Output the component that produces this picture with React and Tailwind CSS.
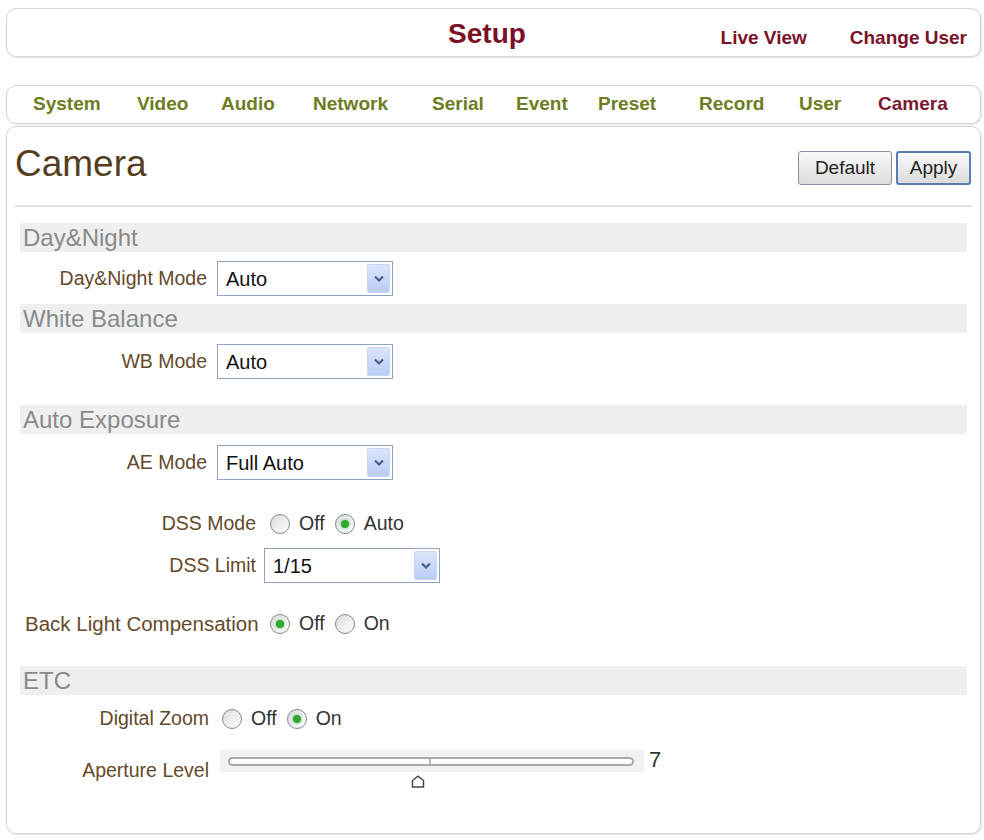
import React from "react";

// section header band
const Band = ({ title, className = "" }) => (
	<div
		className={`h-[29px] bg-[#efefef] pl-[3px] flex items-center text-[24px] leading-none text-[#8a8a8a] ${className}`}
	>
		{title}
	</div>
);

const Chevron = () => (
	<svg width="12" height="8" viewBox="0 0 12 8">
		<path d="M2 1.5 L6 5.5 L10 1.5" fill="none" stroke="#4b5f8c" strokeWidth="2.2" />
	</svg>
);

const Select = ({ value, width = "w-[176px]" }) => (
	<div
		className={`${width} h-[35px] border border-[#8fa5c2] bg-white flex items-center justify-between`}
	>
		<span className="pl-[8px] text-[20px] text-[#111]">{value}</span>
		<div className="w-[23px] h-[29px] mr-[2px] rounded-[2px] border border-[#c8d6f4] bg-gradient-to-b from-[#dbe5fb] to-[#b9cdf5] flex items-center justify-center">
			<Chevron />
		</div>
	</div>
);

const Radio = ({ checked }) => (
	<span className="w-[20px] h-[20px] rounded-full border-[1.5px] border-[#7f8891] bg-gradient-to-br from-[#dcdcdc] to-[#ffffff] flex items-center justify-center shrink-0">
		{checked && (
			<span className="w-[8px] h-[8px] rounded-full bg-[#33a633] shadow-[0_0_2px_1px_#a8dca8]" />
		)}
	</span>
);

const RadioGroup = ({ options, selected }) => (
	<div className="flex items-center gap-[10px]">
		{options.map((opt) => (
			<label key={opt} className="flex items-center gap-[9px] text-[19.5px] text-[#333]">
				<Radio checked={opt === selected} />
				<span>{opt}</span>
			</label>
		))}
	</div>
);

const Label = ({ children, className = "" }) => (
	<div className={`text-[19.5px] text-[#65492a] shrink-0 ${className}`}>
		{children}
	</div>
);

const navItems = [
	["System", "w-[104px]"],
	["Video", "w-[84px]"],
	["Audio", "w-[92px]"],
	["Network", "w-[119px]"],
	["Serial", "w-[84px]"],
	["Event", "w-[82px]"],
	["Preset", "w-[101px]"],
	["Record", "w-[100px]"],
	["User", "w-[79px]"],
	["Camera", "w-[90px]"],
];

const boxStyle =
	"border border-[#d6d6d6] rounded-[10px] bg-white shadow-[1px_1px_2px_rgba(0,0,0,0.12)]";

const App = () => {
	return (
		<div className="min-h-[840px] bg-white pt-[8px] pl-[6px] pr-[3px] font-['Liberation_Sans',Arial,sans-serif]">
			{/* top bar */}
			<div className={`${boxStyle} h-[49px] flex items-start`}>
				<div className="flex-1" />
				<div className="pt-[9px] text-[28px] leading-[32px] font-bold text-[#7a1128]">
					Setup
				</div>
				<div className="flex-1 flex justify-end pr-[13px] pt-[18px] text-[19px] leading-[22px] font-bold text-[#7a1128]">
					<span>Live View</span>
					<span className="ml-[43px]">Change User</span>
				</div>
			</div>

			{/* menu */}
			<div className={`${boxStyle} mt-[28px] h-[39px] flex items-center pl-[26px]`}>
				{navItems.map(([name, w]) => (
					<span
						key={name}
						className={`${w} text-[19px] font-bold ${
							name === "Camera" ? "text-[#7a1a35]" : "text-[#6c7d22]"
						}`}
					>
						{name}
					</span>
				))}
			</div>

			{/* content */}
			<div className={`${boxStyle} mt-[2px] h-[708px]`}>
				<div className="flex items-start justify-between pt-[15px] pl-[8px] pr-[9px]">
					<div className="text-[37px] leading-[44px] text-[#553e1e]">Camera</div>
					<div className="flex gap-[4px] mt-[9px]">
						<button className="w-[94px] h-[34px] rounded-[3px] border border-[#8094ab] bg-gradient-to-b from-[#fafafa] to-[#dcdcdc] text-[19px] text-[#222]">
							Default
						</button>
						<button className="w-[75px] h-[34px] rounded-[3px] border-2 border-[#5b7fb0] bg-gradient-to-b from-[#fafafa] to-[#dcdcdc] text-[19px] text-[#222]">
							Apply
						</button>
					</div>
				</div>
				<div className="mt-[19px] mx-[8px] border-t-2 border-[#e2e2e2]" />

				<div className="mx-[13px]">
					<Band title="Day&Night" className="mt-[16px]" />
					<div className="mt-[9px] flex items-center">
						<Label className="w-[197px] pr-[10px] text-right">Day&amp;Night Mode</Label>
						<Select value="Auto" />
					</div>

					<Band title="White Balance" className="mt-[8px]" />
					<div className="mt-[11px] flex items-center">
						<Label className="w-[197px] pr-[10px] text-right">WB Mode</Label>
						<Select value="Auto" />
					</div>

					<Band title="Auto Exposure" className="mt-[26px]" />
					<div className="mt-[11px] flex items-center">
						<Label className="w-[197px] pr-[10px] text-right">AE Mode</Label>
						<Select value="Full Auto" />
					</div>

					<div className="mt-[32px] h-[24px] flex items-center">
						<Label className="w-[244px] pr-[8px] text-right">DSS Mode</Label>
						<div className="ml-[6px]">
							<RadioGroup options={["Off", "Auto"]} selected="Auto" />
						</div>
					</div>
					<div className="mt-[12px] flex items-center">
						<Label className="w-[244px] pr-[8px] text-right">DSS Limit</Label>
						<Select value="1/15" />
					</div>

					<div className="mt-[29px] h-[24px] flex items-center">
						<Label className="w-[250px] pl-[5px] text-left !text-[20.5px]">
							Back Light Compensation
						</Label>
						<RadioGroup options={["Off", "On"]} selected="Off" />
					</div>

					<Band title="ETC" className="mt-[30px]" />
					<div className="mt-[12px] h-[24px] flex items-center">
						<Label className="w-[197px] pr-[8px] text-right">Digital Zoom</Label>
						<div className="ml-[5px]">
							<RadioGroup options={["Off", "On"]} selected="On" />
						</div>
					</div>

					<div className="mt-[19px] flex items-start">
						<Label className="w-[197px] pr-[8px] pt-[6px] text-right">Aperture Level</Label>
						<div className="relative w-[424px] ml-[3px] h-[40px]">
							<div className="h-[22px] bg-[#f1f1f1] flex items-center pl-[8px] pr-[10px]">
								<div className="relative flex-1 h-[9px] rounded-full border-2 border-[#a9a9a9] bg-white">
									<div className="absolute left-[199px] top-0 w-[2px] h-[5px] bg-[#b5b5b5]" />
								</div>
							</div>
							<svg
								className="absolute left-[191px] top-[25px]"
								width="14"
								height="13"
								viewBox="0 0 14 13"
							>
								<path
									d="M1.5 12 V5.5 L7 1.2 L12.5 5.5 V12 Z"
									fill="white"
									stroke="#444"
									strokeWidth="1.5"
								/>
							</svg>
						</div>
						<div className="ml-[5px] -mt-[7px] text-[22px] text-[#333]">7</div>
					</div>
				</div>
			</div>
		</div>
	);
};

export default App;
